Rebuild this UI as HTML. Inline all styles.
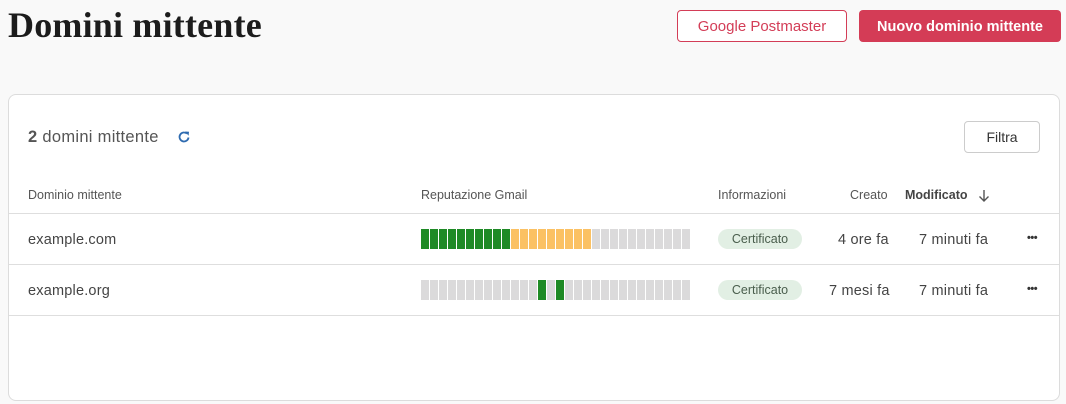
<!DOCTYPE html><html><head><meta charset="utf-8"><style>
*{box-sizing:border-box;margin:0;padding:0}
body{width:1066px;height:404px;background:#f9f9f9;font-family:"Liberation Sans",sans-serif;position:relative;overflow:hidden;color:#333}
.a{position:absolute;white-space:nowrap}
h1{position:absolute;left:8px;top:4px;font-family:"Liberation Serif",serif;font-weight:bold;font-size:36px;color:#1c1c1c;letter-spacing:0.2px}
.btn{position:absolute;top:10px;height:32px;border-radius:4px;font-size:15px;display:flex;align-items:center;justify-content:center}
.card{position:absolute;left:8px;top:94px;width:1052px;height:307px;background:#fff;border:1px solid #dcdcdc;border-radius:8px}
.line{position:absolute;left:9px;width:1050px;height:1px;background:#dedede}
.th{font-size:12.5px;color:#555;top:188px}
.td{font-size:14.5px;color:#444;letter-spacing:0.2px}
.bars{position:absolute;left:421px;display:flex;gap:1px}
.bars i{display:block;width:8px;height:20px;background:#dbdadb}
.g{background:#1e8a25!important}.y{background:#fbc163!important}
.pill{position:absolute;left:718px;width:84px;height:20px;border-radius:10px;background:#e2efe4;color:#4a5e4d;font-size:12.5px;display:flex;align-items:center;justify-content:center}
.dots{position:absolute;left:1027px;font-size:11px;color:#333;font-weight:bold;letter-spacing:-0.5px}
</style></head><body>
<h1>Domini mittente</h1>
<div class="btn" style="left:677px;width:170px;border:1px solid #d33d57;color:#d33d57;background:#fff">Google Postmaster</div>
<div class="btn" style="left:859px;width:202px;background:#d43c56;color:#fff;font-weight:bold;font-size:14.5px;padding-top:2px">Nuovo dominio mittente</div>
<div class="card"></div>
<div class="a" style="left:28px;top:128px;font-size:16.5px;color:#555;letter-spacing:0.3px"><b>2</b> domini mittente</div>
<svg class="a" style="left:177px;top:130px" width="14" height="14" viewBox="0 0 14 14"><path d="M11.5 7.5A4.5 4.5 0 1 1 10 3.6" fill="none" stroke="#2f6bb0" stroke-width="1.8"/><path d="M8 1.5L12 1.8L11.6 5.8Z" fill="#2f6bb0"/></svg>
<div class="btn" style="left:964px;top:121px;width:76px;height:32px;border:1px solid #ccc;background:#fff;color:#333;font-size:14px">Filtra</div>
<div class="a th" style="left:28px">Dominio mittente</div>
<div class="a th" style="left:421px">Reputazione Gmail</div>
<div class="a th" style="left:718px">Informazioni</div>
<div class="a th" style="left:850px">Creato</div>
<div class="a th" style="left:905px;font-weight:bold;color:#444">Modificato</div>
<svg class="a" style="left:978px;top:189px" width="12" height="13" viewBox="0 0 12 13"><path d="M6 1V12M1.5 7.5L6 12L10.5 7.5" fill="none" stroke="#555" stroke-width="1.4"/></svg>
<div class="line" style="top:213px"></div>
<div class="line" style="top:264px"></div>
<div class="line" style="top:315px"></div>
<div class="a td" style="left:28px;top:232px">example.com</div>
<div class="a td" style="left:28px;top:283px">example.org</div>
<div class="bars" style="top:229px"><i class="g"></i><i class="g"></i><i class="g"></i><i class="g"></i><i class="g"></i><i class="g"></i><i class="g"></i><i class="g"></i><i class="g"></i><i class="g"></i><i class="y"></i><i class="y"></i><i class="y"></i><i class="y"></i><i class="y"></i><i class="y"></i><i class="y"></i><i class="y"></i><i class="y"></i><i></i><i></i><i></i><i></i><i></i><i></i><i></i><i></i><i></i><i></i><i></i></div>
<div class="bars" style="top:280px"><i></i><i></i><i></i><i></i><i></i><i></i><i></i><i></i><i></i><i></i><i></i><i></i><i></i><i class="g"></i><i></i><i class="g"></i><i></i><i></i><i></i><i></i><i></i><i></i><i></i><i></i><i></i><i></i><i></i><i></i><i></i><i></i></div>
<div class="pill" style="top:229px">Certificato</div>
<div class="pill" style="top:280px">Certificato</div>
<div class="a td" style="left:838px;top:232px">4 ore fa</div>
<div class="a td" style="left:829px;top:283px">7 mesi fa</div>
<div class="a td" style="left:919px;top:232px">7 minuti fa</div>
<div class="a td" style="left:919px;top:283px">7 minuti fa</div>
<div class="dots" style="top:232px">•••</div>
<div class="dots" style="top:283px">•••</div>
</body></html>
